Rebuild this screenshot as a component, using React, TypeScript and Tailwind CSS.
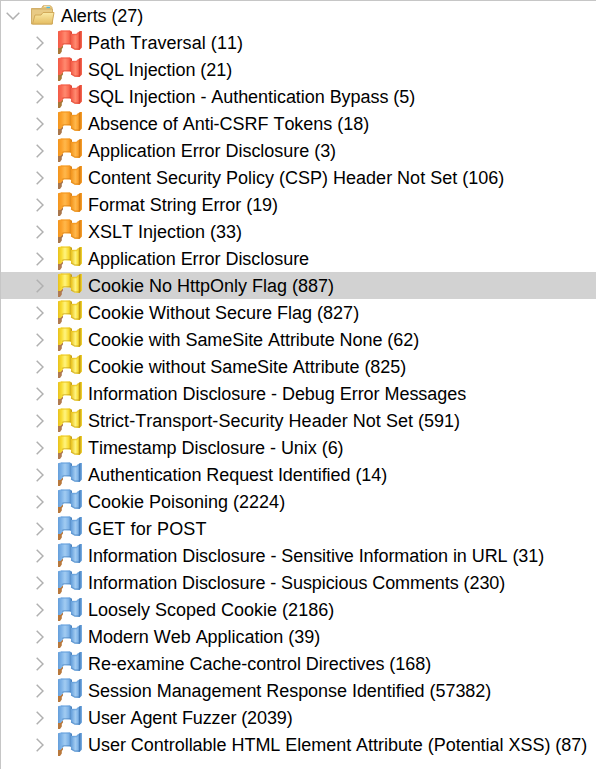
import React from "react";

type Level = "high" | "medium" | "low" | "info";

const palette: Record<Level, { light: string; base: string; mid: string; dark: string; pole: string }> = {
  high: { light: "#ff8a70", base: "#fa6b54", mid: "#f25a46", dark: "#d8402e", pole: "#a87838" },
  medium: { light: "#ffb84c", base: "#fca22c", mid: "#f2941c", dark: "#d47c12", pole: "#a8764c" },
  low: { light: "#fff480", base: "#f8dc34", mid: "#e8c01c", dark: "#bf9410", pole: "#b07a50" },
  info: { light: "#a2ccf2", base: "#80b4e8", mid: "#649eda", dark: "#437cba", pole: "#b8783c" },
};

// `adjust` is the number of pixels spread over the label's letters.
const alerts: { text: string; level: Level; adjust: number; selected?: boolean }[] = [
  { text: "Path Traversal (11)", level: "high", adjust: 1 },
  { text: "SQL Injection (21)", level: "high", adjust: -1 },
  { text: "SQL Injection - Authentication Bypass (5)", level: "high", adjust: -2 },
  { text: "Absence of Anti-CSRF Tokens (18)", level: "medium", adjust: -1 },
  { text: "Application Error Disclosure (3)", level: "medium", adjust: -1 },
  { text: "Content Security Policy (CSP) Header Not Set (106)", level: "medium", adjust: 0 },
  { text: "Format String Error (19)", level: "medium", adjust: -1 },
  { text: "XSLT Injection (33)", level: "medium", adjust: 0 },
  { text: "Application Error Disclosure", level: "low", adjust: -1 },
  { text: "Cookie No HttpOnly Flag (887)", level: "low", adjust: 0, selected: true },
  { text: "Cookie Without Secure Flag (827)", level: "low", adjust: 0 },
  { text: "Cookie with SameSite Attribute None (62)", level: "low", adjust: -2 },
  { text: "Cookie without SameSite Attribute (825)", level: "low", adjust: -2 },
  { text: "Information Disclosure - Debug Error Messages", level: "low", adjust: -2 },
  { text: "Strict-Transport-Security Header Not Set (591)", level: "low", adjust: 1 },
  { text: "Timestamp Disclosure - Unix (6)", level: "low", adjust: -1.5 },
  { text: "Authentication Request Identified (14)", level: "info", adjust: -2 },
  { text: "Cookie Poisoning (2224)", level: "info", adjust: 0 },
  { text: "GET for POST", level: "info", adjust: 1.5 },
  { text: "Information Disclosure - Sensitive Information in URL (31)", level: "info", adjust: -4 },
  { text: "Information Disclosure - Suspicious Comments (230)", level: "info", adjust: -4 },
  { text: "Loosely Scoped Cookie (2186)", level: "info", adjust: 0 },
  { text: "Modern Web Application (39)", level: "info", adjust: -1 },
  { text: "Re-examine Cache-control Directives (168)", level: "info", adjust: -2 },
  { text: "Session Management Response Identified (57382)", level: "info", adjust: -2 },
  { text: "User Agent Fuzzer (2039)", level: "info", adjust: -2.5 },
  { text: "User Controllable HTML Element Attribute (Potential XSS) (87)", level: "info", adjust: -2 },
];

function Flag({ level }: { level: Level }) {
  const c = palette[level];
  const left = `flag-left-${level}`;
  const right = `flag-right-${level}`;
  return (
    <svg className="h-6 w-6 shrink-0" viewBox="0 0 24 24">
      <defs>
        <linearGradient id={left} x1="0" x2="1" y1="0" y2="0">
          <stop offset="0" stopColor={c.mid} />
          <stop offset="0.25" stopColor={c.base} />
          <stop offset="0.5" stopColor={c.light} />
          <stop offset="0.75" stopColor={c.base} />
          <stop offset="1" stopColor={c.dark} />
        </linearGradient>
        <linearGradient id={right} x1="0" x2="1" y1="0" y2="0">
          <stop offset="0" stopColor={c.mid} />
          <stop offset="0.4" stopColor={c.light} />
          <stop offset="0.65" stopColor={c.base} />
          <stop offset="0.78" stopColor={c.dark} />
          <stop offset="1" stopColor={c.base} />
        </linearGradient>
      </defs>
      <path d="M0 15h5v2.500L3.800 19v2.500L2 24H0z" fill={c.pole} />
      <path d="M0 1.200 3 .5h9L14 1.800v14l-2-1.300H6L4 16.500 2.500 18H0z" fill={`url(#${left})`} />
      <path d="M13 4h5.500L20.500 2 22 1h2v16.500L21.500 20H17l-4-2.500z" fill={`url(#${right})`} />
      <path d="M3 1.200h9M14 4.500h4.500l2-2" fill="none" stroke={c.mid} strokeOpacity=".7" strokeWidth="1.300" />
      <path d="M4 14.500 6 13.600h6.500M13 17l4 2h4" fill="none" stroke={c.dark} strokeOpacity=".45" strokeWidth="1.300" />
    </svg>
  );
}

function Folder() {
  return (
    <svg className="h-6 w-6 shrink-0" viewBox="0 0 24 24">
      <defs>
        <linearGradient id="folder-front" x1="0" x2="0" y1="0" y2="1">
          <stop offset="0" stopColor="#faeaa6" />
          <stop offset="1" stopColor="#e5bd62" />
        </linearGradient>
      </defs>
      <path d="M.5 3.500h10L12 .8h7.500L21 2.500v5H.500z" fill="#e6c679" stroke="#d4b06c" />
      <path d="M13 1.500h6" stroke="#f4e8be" />
      <path d="M15.500 2.500H19" stroke="#48b8e8" strokeWidth="1.500" />
      <path d="M.5 4h21v15H.5z" fill="#e8ca84" stroke="#d0ae68" />
      <path d="M4 10h6l2-2.500h11L21 19H1.500z" fill="url(#folder-front)" stroke="#d2aa5a" />
    </svg>
  );
}

function Chevron({ open = false }: { open?: boolean }) {
  return open ? (
    <svg className="h-2 w-[14px] shrink-0" viewBox="0 0 14 8" fill="none" stroke="#b0b0b0" strokeWidth="1.500">
      <path d="m.7 .7 6.300 6.300 6.300-6.300" />
    </svg>
  ) : (
    <svg className="h-[14px] w-2 shrink-0" viewBox="0 0 8 14" fill="none" stroke="#b0b0b0" strokeWidth="1.500">
      <path d="m.7 .7 6.300 6.300-6.300 6.300" />
    </svg>
  );
}

export default function App() {
  return (
    <div className="h-[769px] w-[596px] overflow-hidden border-t border-l border-[#c6c6c6] bg-white pt-px font-['Liberation_Sans',Arial,sans-serif] text-[18px] leading-[27px] text-black [font-kerning:none]">
      <div className="flex h-[27px] items-center pl-[5px]">
        <Chevron open />
        <div className="ml-[11px] flex pt-[2px]"><Folder /></div>
        <span className="ml-[6px] whitespace-nowrap pt-[2px] tracking-[-0.08px]">Alerts (27)</span>
      </div>
      {alerts.map((a) => (
        <div key={a.text} className={`flex h-[27px] items-center pl-[35px] ${a.selected ? "bg-[#d2d2d2]" : ""}`}>
          <Chevron />
          <div className="ml-[14px] flex pb-px"><Flag level={a.level} /></div>
          <span className="ml-[6px] whitespace-nowrap pt-[2px]" style={{ letterSpacing: `${a.adjust / a.text.length}px` }}>
            {a.text}
          </span>
        </div>
      ))}
    </div>
  );
}
